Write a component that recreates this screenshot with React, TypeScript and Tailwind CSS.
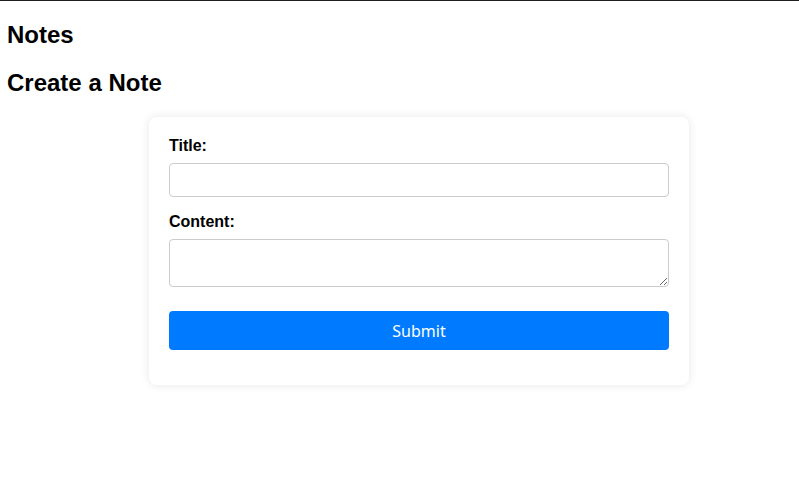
export default function App() {
  return (
    <div className="min-h-[489px] border-t border-[#1f1f1f] bg-white pl-[7px] pt-[20px] text-black" style={{ fontFamily: '"Liberation Sans", Arial, sans-serif' }}>
      <h1 className="text-[24px] font-bold leading-[27px]">Notes</h1>
      <h2 className="mt-[21px] text-[24px] font-bold leading-[27px]">Create a Note</h2>
      <div className="ml-[142px] mt-[21px] w-[540px] rounded-[8px] bg-white px-[20px] pb-[35px] pt-[20px] shadow-[0_0_10px_rgba(0,0,0,0.1)]">
        <form onSubmit={(e) => e.preventDefault()}>
          <label className="mb-[8px] block text-[16px] font-bold leading-[18px]">Title:</label>
          <input type="text" className="mb-[16px] block h-[34px] w-full rounded-[4px] border border-[#cccccc] bg-white px-2 outline-none" />
          <label className="mb-[8px] block text-[16px] font-bold leading-[18px]">Content:</label>
          <textarea className="block h-[48px] w-full rounded-[4px] border border-[#cccccc] bg-white px-2 outline-none" />
          <button type="submit" className="mt-[24px] block h-[39px] w-full rounded-[4px] bg-[#007bff] text-[16px] text-white" style={{ fontFamily: '"Noto Sans", "Open Sans", sans-serif' }}>
            Submit
          </button>
        </form>
      </div>
    </div>
  );
}
